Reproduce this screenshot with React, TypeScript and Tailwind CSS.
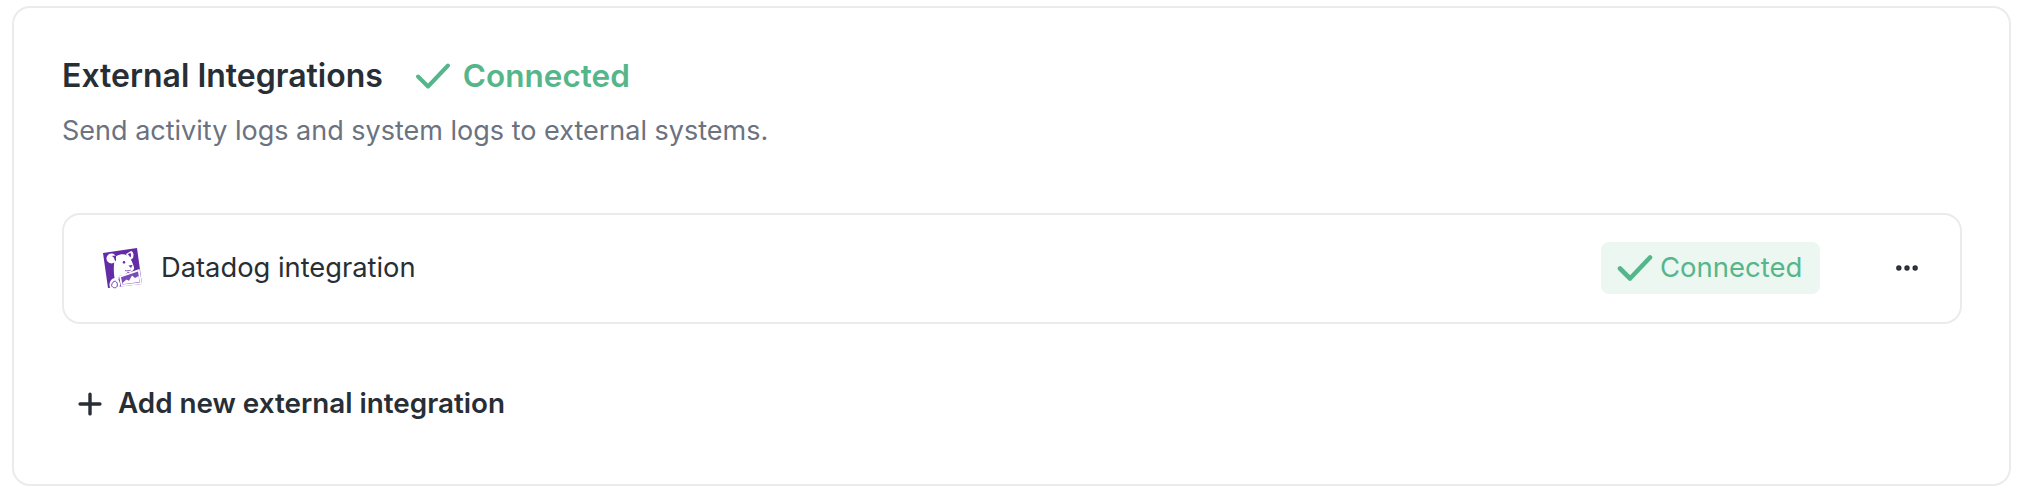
import React from "react";
import { MoreHorizontal, Plus } from "lucide-react";

const CheckMark = ({ className, sw }: { className: string; sw: number }) => (
  <svg viewBox="0 0 36 28" fill="none" className={className}>
    <path d="M3 14.5 L13 24.5 L33 3.5" stroke="currentColor" strokeWidth={sw} strokeLinecap="round" strokeLinejoin="round" />
  </svg>
);

const DatadogLogo = () => (
  <svg viewBox="0 0 40 42" className="w-[40px] h-[42px] shrink-0">
    {/* tile */}
    <path d="M1 5 L35 0 L40 36 L6 40 Z" fill="#632ca6" />
    {/* head */}
    <path d="M13 9 C17 6 22 5.5 25 7.5 C27 10 30 12 30.5 15 C31 17 32.5 19 32 21 C31 23.5 28 24.5 26 24 L23 26.5 L17 28 L16.5 32 L12.5 30 C11.5 24 11.5 17 13 9 Z" fill="#fff" />
    {/* ears */}
    <circle cx="9.5" cy="10.5" r="5" fill="#fff" />
    <path d="M9 8 C11 8 12.6 9.8 12.6 12 L14 13.5 L14 7.5 Z" fill="#632ca6" />
    <path d="M24 6 L29 3 C31.5 3.5 32 7 31 10 L28.5 12 C26.5 11 25 8.5 24 6 Z" fill="#fff" />
    <path d="M25.8 6 L28.6 5 C29.3 6.5 29 8.5 28.3 9.6 Z" fill="#632ca6" />
    {/* eye + nose */}
    <ellipse cx="22" cy="14.3" rx="1.2" ry="1.4" fill="#632ca6" />
    <path d="M26.5 17.6 L30.5 17 L29 20 Z" fill="#632ca6" />
    <path d="M23 22.6 C25 23 27 22.8 28.8 22" stroke="#632ca6" strokeWidth="0.8" fill="none" />
    {/* graph */}
    <path d="M17 28 L37.5 21 L40 36 L19 38.6 Z" fill="#fff" />
    <path d="M19 29.3 L36 23.6 L37.8 34.5 L20.5 36.6 Z" fill="#7a4bb8" />
    <path d="M20.5 35 L24.5 31.5 L27 32.8 L30 27.5 L33 30 L36.6 28 L37.4 34 L20.6 36.2 Z" fill="#fff" />
    {/* paw */}
    <path d="M7.5 37 C7.5 33 10 30 13 30 C15.5 30 17.6 32.5 18 35.5 C18.4 39 16 42 12.5 42 C9.5 42 7.5 40 7.5 37 Z" fill="#fff" />
    <path d="M9.6 37.5 C9.8 35 11.5 33 13.4 33.2 C15.2 33.8 15.9 36.5 15 38.5 C14 40.3 10.8 40.4 9.6 37.5 Z" fill="none" stroke="#632ca6" strokeWidth="0.9" />
  </svg>
);

export default function App() {
  return (
    <div className="bg-white w-[2022px] h-[494px] pt-[6px] pl-[12px] font-['Inter',sans-serif]">
      {/* OUTER CARD */}
      <div className="w-[1999px] h-[480px] border-2 border-[#ebebeb] rounded-[18px] pl-[48px] pr-[47px] pt-[46px]">
        {/* HEADER */}
        <div className="flex items-center h-[44px]">
          <h1 className="text-[32px] font-semibold text-[#272e35] leading-none">External Integrations</h1>
          <div className="flex items-center ml-[32px] gap-[12px] text-[#56b68b]">
            <CheckMark className="w-[36px] h-[28px]" sw={4} />
            <span className="text-[31.5px] font-semibold leading-none">Connected</span>
          </div>
        </div>
        <p className="mt-[15px] text-[27px] leading-[36px] text-[#6b7280]">Send activity logs and system logs to external systems.</p>

        {/* INTEGRATION ROW */}
        <div className="mt-[64px] h-[111px] border-2 border-[#ebebeb] rounded-[18px] flex items-center pl-[38px] pr-[39px]">
          <DatadogLogo />
          <span className="ml-[19px] text-[27.3px] text-[#272e35]">Datadog integration</span>
          <div className="ml-auto mb-[2px] flex items-center h-[52px] w-[219px] rounded-[8px] bg-[#ecf7f2] pl-[16px] gap-[7px] text-[#56b68b]">
            <CheckMark className="w-[36px] h-[28px]" sw={4.6} />
            <span className="text-[27.5px] leading-none">Connected</span>
          </div>
          <MoreHorizontal className="ml-[73px] mb-[2px] w-[28px] h-[28px] text-[#272e35]" strokeWidth={2.6} />
        </div>

        {/* ADD BUTTON */}
        <div className="mt-[63px] flex items-center pl-[11px] gap-[11px] text-[#272e35]">
          <Plus className="w-[34px] h-[34px]" strokeWidth={2.4} />
          <span className="text-[27.8px] font-semibold leading-none">Add new external integration</span>
        </div>
      </div>
    </div>
  );
}
